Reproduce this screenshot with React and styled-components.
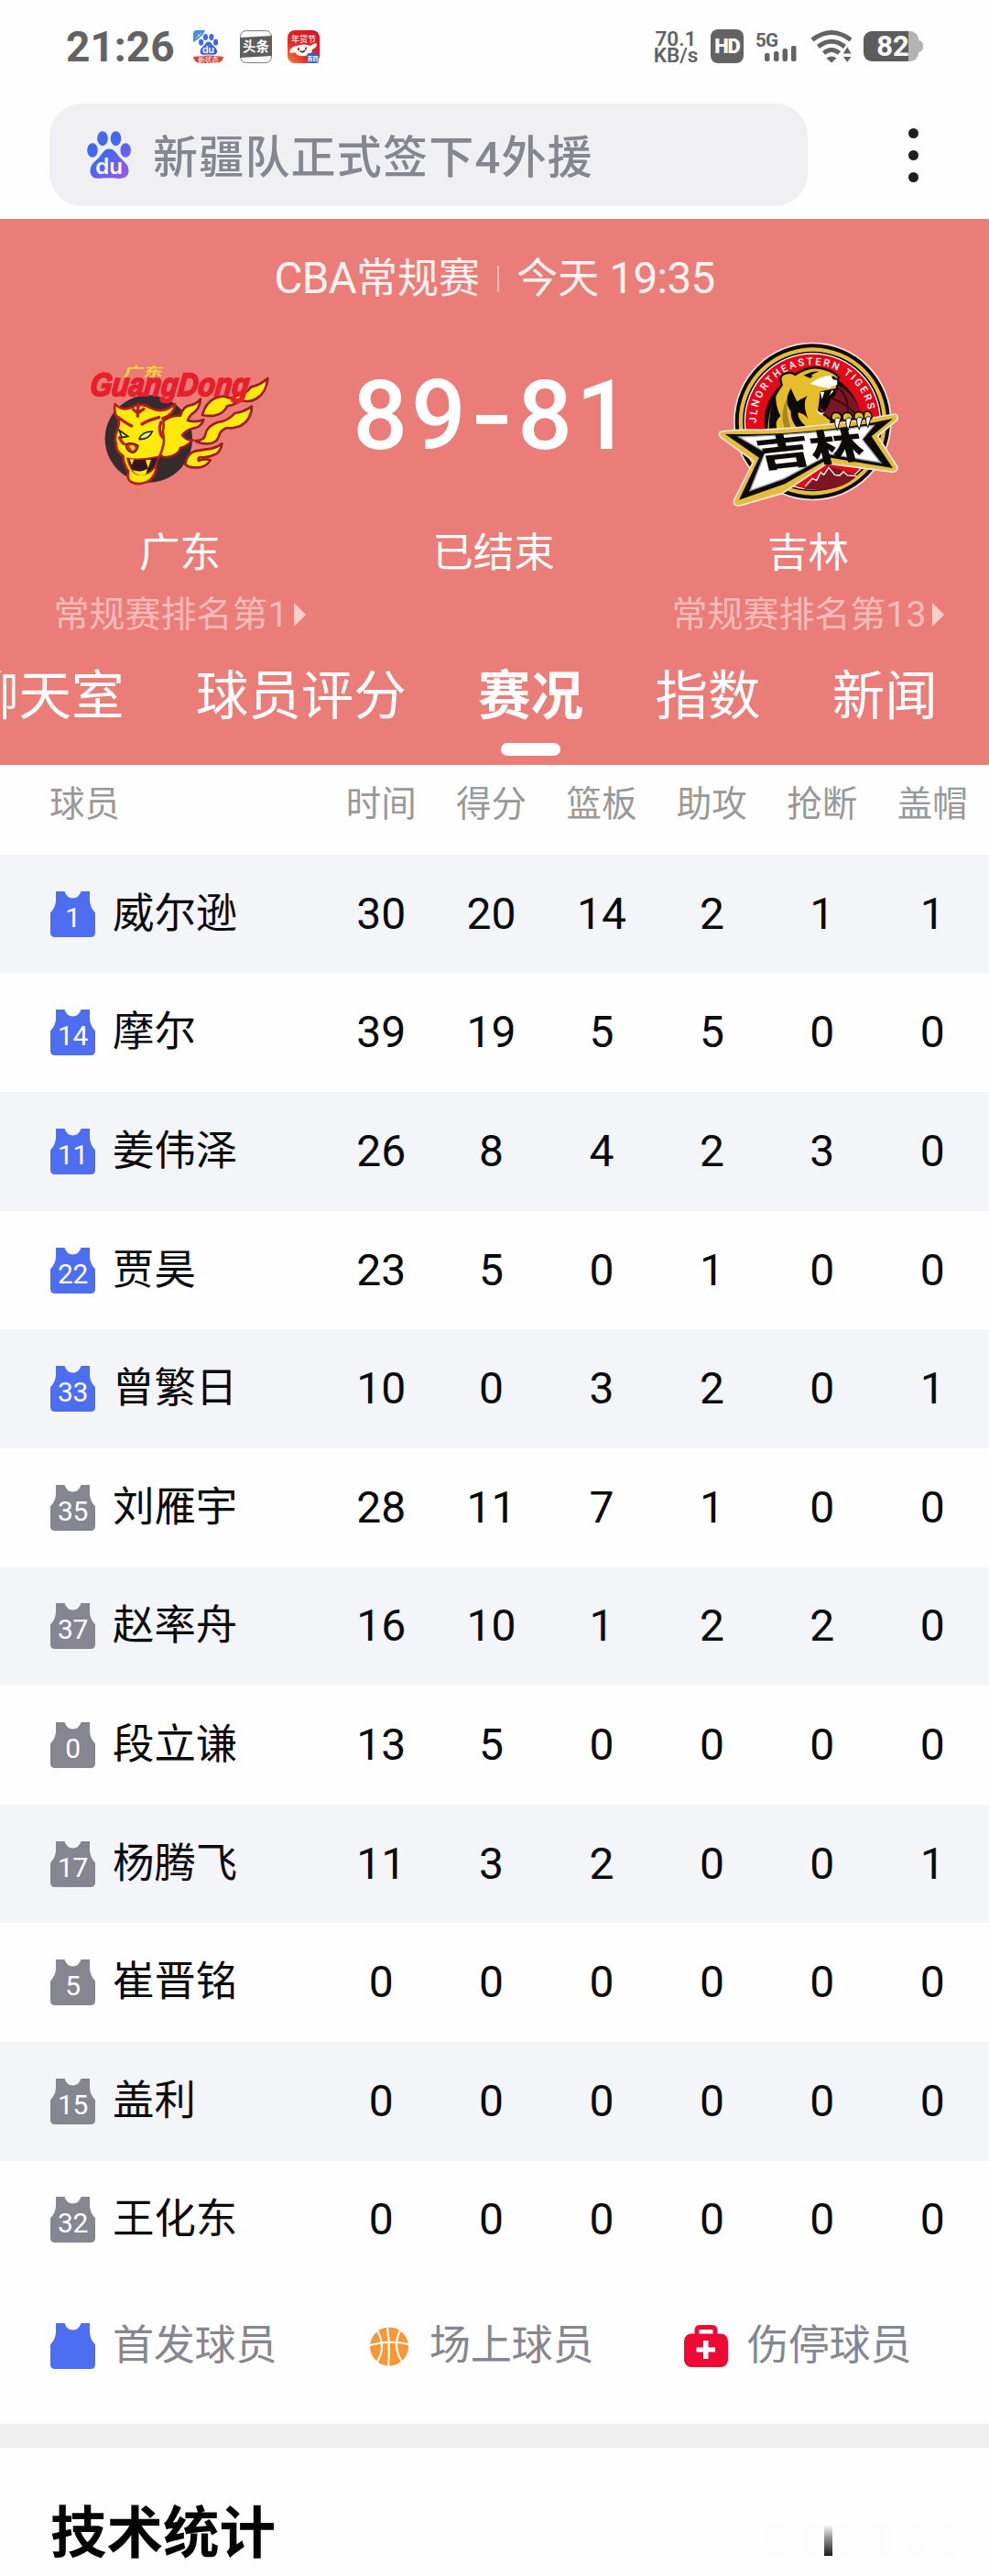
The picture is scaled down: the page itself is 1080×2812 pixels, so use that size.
import React from 'react'
import styled, { createGlobalStyle } from 'styled-components'

const GlobalStyle = createGlobalStyle`
  * {
    box-sizing: border-box;
  }

  body {
    margin: 0;
    background: #fefefe;
    font-family: Roboto, "Noto Sans CJK SC", sans-serif;
  }

  svg {
    display: block;
    flex-shrink: 0;
    overflow: visible;
  }
`;

const Page = styled.div`
  width: 1080px;
  height: 2812px;
  overflow: hidden;
  display: flex;
  flex-direction: column;
  background: #fefefe;
`;

/* status bar */

const StatusBar = styled.div`
  height: 113px;
  padding: 0 72px 12px 72px;
  display: flex;
  align-items: center;
  justify-content: space-between;
  color: #636363;
`;

const StatusGroup = styled.div`
  display: flex;
  align-items: center;
`;

const Clock = styled.div`
  width: 138px;
  font-size: 46px;
  font-weight: 700;
  line-height: 50px;
`;

const AppIcons = styled.div`
  display: flex;
  gap: 17px;
`;

const Speed = styled.div`
  width: 46px;
  margin-right: 15px;
  display: flex;
  flex-direction: column;
  align-items: center;
  font-size: 22.5px;
  line-height: 18px;
  font-weight: 600;
  white-space: nowrap;
`;

const HdBadge = styled.div`
  width: 36px;
  height: 37px;
  margin-right: 13px;
  border-radius: 8px;
  background: #636363;
  color: #fff;
  font-size: 22px;
  font-weight: 900;
  line-height: 38px;
  letter-spacing: -1px;
  text-align: center;
`;

const Battery = styled.div`
  display: flex;
  align-items: center;
`;

const BatteryBody = styled.div`
  width: 60px;
  height: 33px;
  padding-left: 4px;
  border-radius: 9px;
  background: linear-gradient(to right, #5c5c5c 82%, #b3b3b3 82%);
  color: #fff;
  font-size: 31px;
  font-weight: 700;
  line-height: 34px;
  text-align: center;
`;

const BatteryTip = styled.div`
  width: 5px;
  height: 13px;
  border-radius: 0 5px 5px 0;
  background: #b3b3b3;
`;

/* search */

const SearchRow = styled.div`
  height: 126px;
  padding: 0 77px 14px 54px;
  display: flex;
  align-items: center;
  justify-content: space-between;
`;

const SearchBox = styled.div`
  width: 828px;
  height: 112px;
  padding-left: 41px;
  display: flex;
  align-items: center;
  gap: 24px;
  border-radius: 36px;
  background: #f0f0f2;
`;

const SearchText = styled.span`
  color: #858690;
  font-size: 49px;
  font-weight: 500;
  line-height: 60px;
  letter-spacing: 1.2px;
  padding-top: 8px;
`;

const MoreButton = styled.div`
  display: flex;
  flex-direction: column;
  gap: 13px;
`;

const Dot = styled.span`
  width: 11px;
  height: 11px;
  border-radius: 50%;
  background: #1f1f1f;
`;

/* match header */

const MatchHeader = styled.div`
  height: 596px;
  padding-top: 38px;
  overflow: hidden;
  background: #eb7d79;
  color: #fff;
`;

const MatchInfo = styled.div`
  height: 54px;
  display: flex;
  align-items: center;
  justify-content: center;
  font-size: 45px;
  line-height: 56px;
  color: #fff3f1;
`;

const Latin = styled.span`
  font-size: 47.5px;
  letter-spacing: -0.6px;
`;

const InfoText = styled.span`
  padding-top: 2px;
`;

const InfoDivider = styled.span`
  width: 2px;
  height: 29px;
  margin: 0 19px;
  background: #f6b9b5;
`;

const Versus = styled.div`
  display: grid;
  grid-template-columns: 393px 292px 395px;
`;

const Team = styled.div`
  display: flex;
  flex-direction: column;
  align-items: center;
`;

const LogoBox = styled.div`
  height: 242px;
  padding-top: 41px;
`;

const TeamName = styled.div`
  height: 60px;
  font-size: 44.5px;
  line-height: 63px;
`;

const Rank = styled.div`
  height: 74px;
  display: flex;
  align-items: center;
  gap: 7px;
  font-size: 39px;
  line-height: 74px;
  padding-top: 2px;
  color: #f6bcb9;
  white-space: nowrap;
`;

const RankArrow = styled.span`
  border-left: 13px solid #f9d0ce;
  border-top: 13px solid transparent;
  border-bottom: 13px solid transparent;
`;

const Score = styled.div`
  height: 242px;
  font-size: 105px;
  font-weight: 500;
  line-height: 242px;
  letter-spacing: 4px;
  white-space: nowrap;
`;

const Dash = styled.span`
  font-family: Inter, sans-serif;
  font-weight: 500;
`;

const Tabs = styled.div`
  height: 128px;
  margin: 12px 0 0 -37px;
  display: flex;
  gap: 78.3px;
`;

const Tab = styled.div`
  display: flex;
  flex-direction: column;
  align-items: center;
  flex-shrink: 0;
  font-size: 57.5px;
  line-height: 84px;
  font-weight: ${({ $active }) => ($active ? 700 : 400)};
  white-space: nowrap;
`;

const Indicator = styled.span`
  width: 65px;
  height: 14px;
  margin-top: 8px;
  border-radius: 7px;
  background: #fff;
`;

/* player table */

const columns = '356px repeat(6, 120.4px)';

const TableHead = styled.div`
  height: 98px;
  padding-bottom: 13px;
  display: grid;
  grid-template-columns: ${columns};
  align-items: center;
  font-size: 38.5px;
  line-height: 56px;
  color: #999;
`;

const HeadName = styled.span`
  padding-left: 54px;
`;

const HeadCell = styled.span`
  text-align: center;
`;

const Row = styled.div`
  height: 129.6px;
  display: grid;
  grid-template-columns: ${columns};
  align-items: center;
  background: ${({ $shaded }) => ($shaded ? '#f4f5f9' : '#fefefe')};
`;

const Player = styled.div`
  padding-left: 55px;
  display: flex;
  align-items: center;
  gap: 19px;
  font-size: 45.4px;
  line-height: 60px;
  color: #0a0a0a;
  white-space: nowrap;
`;

const Stat = styled.span`
  font-size: 48px;
  line-height: 60px;
  text-align: center;
  color: #0a0a0a;
`;

/* legend and next section */

const Legend = styled.div`
  height: 158px;
  padding: 0 0 12px 55px;
  display: flex;
  align-items: center;
`;

const LegendItem = styled.div`
  width: ${({ $width }) => $width}px;
  display: flex;
  align-items: center;
  gap: ${({ $gap }) => $gap}px;
  font-size: 45px;
  line-height: 60px;
  letter-spacing: -0.2px;
  color: #858690;
  white-space: nowrap;
`;

const Band = styled.div`
  height: 26px;
  background: #efefef;
`;

const Section = styled.div`
  flex: 1;
  padding: 52px 24px 0 55px;
  display: flex;
  justify-content: space-between;
`;

const SectionTitle = styled.h2`
  margin: 0;
  font-size: 61.5px;
  line-height: 84px;
  font-weight: 700;
  color: #050505;
`;

const FadedMark = styled.div`
  width: 234px;
  height: 34px;
  margin-top: 32px;
  padding-left: 78px;
  background: repeating-linear-gradient(to right, #fefefe 0 14px, #fcfcfc 22px 30px, #fefefe 38px);
`;

const FadedStroke = styled.div`
  width: 9px;
  height: 34px;
  background: linear-gradient(to bottom, #fefefe, #999 40%, #1c1c1c);
`;

const players = [
  { no: 1, name: '威尔逊', starter: true, stats: [30, 20, 14, 2, 1, 1] },
  { no: 14, name: '摩尔', starter: true, stats: [39, 19, 5, 5, 0, 0] },
  { no: 11, name: '姜伟泽', starter: true, stats: [26, 8, 4, 2, 3, 0] },
  { no: 22, name: '贾昊', starter: true, stats: [23, 5, 0, 1, 0, 0] },
  { no: 33, name: '曾繁日', starter: true, stats: [10, 0, 3, 2, 0, 1] },
  { no: 35, name: '刘雁宇', stats: [28, 11, 7, 1, 0, 0] },
  { no: 37, name: '赵率舟', stats: [16, 10, 1, 2, 2, 0] },
  { no: 0, name: '段立谦', stats: [13, 5, 0, 0, 0, 0] },
  { no: 17, name: '杨腾飞', stats: [11, 3, 2, 0, 0, 1] },
  { no: 5, name: '崔晋铭', stats: [0, 0, 0, 0, 0, 0] },
  { no: 15, name: '盖利', stats: [0, 0, 0, 0, 0, 0] },
  { no: 32, name: '王化东', stats: [0, 0, 0, 0, 0, 0] },
];

const heads = ['时间', '得分', '篮板', '助攻', '抢断', '盖帽'];
const tabs = ['聊天室', '球员评分', '赛况', '指数', '新闻'];

function Paw({ width, id, color }) {
  return (
    <svg width={width} height={width * 52 / 48} viewBox="0 0 48 52">
      <defs>
        <linearGradient id={id} x1="0" y1="0" x2="48" y2="52" gradientUnits="userSpaceOnUse">
          <stop offset="0.45" stopColor="#4169ee" />
          <stop offset="1" stopColor={color} />
        </linearGradient>
      </defs>
      <g fill={`url(#${id})`}>
        <ellipse cx="6" cy="21" rx="5.8" ry="7.8" />
        <ellipse cx="17" cy="8.2" rx="5.8" ry="8" />
        <ellipse cx="31.5" cy="8.2" rx="5.8" ry="8" />
        <ellipse cx="42.2" cy="21" rx="5.8" ry="7.8" />
        <path d="M24 19.500c6 0 8 5 12 9.500 5 5 9.500 8 9.500 14.500 0 7-6 8.500-12 8.300-7-.6-12-.6-19 0-6 .2-11-1.300-11-8.300 0-6.500 4.500-9.500 9.500-14.500 4-4.500 6-9.500 11-9.500z" />
      </g>
      <text x="24" y="47" textAnchor="middle" fontFamily="Inter, sans-serif" fontWeight="600" fontSize="24" fill="#fff">du</text>
    </svg>
  )
}

function BaiduApp() {
  return (
    <svg width="35" height="36" viewBox="0 0 35 36">
      <path d="M1 13V4q0-4 4-4h9q-3 8-13 13z" fill="#4a8be0" />
      <path d="M4 9l6-6M6 4l3 4" stroke="#bfe0ff" strokeWidth="1" />
      <g transform="translate(7 4) scale(.44)">
        <Paw width={48} id="pawSmall" color="#3a52c8" />
      </g>
      <path d="M1 29q16-3 33 0-1 7-9 7H10q-8 0-9-7z" fill="#d8433f" />
      <text x="17.500" y="35" textAnchor="middle" fontSize="7.500" fontFamily="Noto Sans CJK SC" fill="#fff">新状态</text>
    </svg>
  )
}

function ToutiaoApp() {
  return (
    <svg width="35" height="36" viewBox="0 0 35 36">
      <rect x=".6" y=".6" width="33.800" height="34.800" rx="6" fill="#fff" stroke="#777" />
      <path d="M0 8l35-2v22l-35 2z" fill="#5e5e5e" />
      <text x="17.500" y="23" textAnchor="middle" fontSize="14.500" fontWeight="700" fontFamily="Noto Sans CJK SC" fill="#fff">头条</text>
    </svg>
  )
}

function FestivalApp() {
  return (
    <svg width="35" height="36" viewBox="0 0 35 36">
      <defs>
        <linearGradient id="fest" x1="0" y1="1" x2="1" y2="0">
          <stop offset="0" stopColor="#f58a35" />
          <stop offset=".35" stopColor="#e5292b" />
          <stop offset="1" stopColor="#cf1626" />
        </linearGradient>
      </defs>
      <rect width="35" height="36" rx="8" fill="url(#fest)" />
      <text x="17.500" y="13" textAnchor="middle" fontSize="9" fontWeight="500" fontFamily="Noto Sans CJK SC" fill="#fff1dc">年货节</text>
      <path d="M2 24q1-6 8-7 8-3 15 0 5-4 7-2 0 4-5 6 0 6-8 7-9 1-11-4-3 2-6 0z" fill="#fff4ef" />
      <path d="M12 19v3M20 18.500v3M13.500 22.500q3 2.500 5.500-.5" stroke="#3a1010" strokeWidth="1.400" fill="none" />
      <rect x="21" y="25" width="13" height="11" rx="3" fill="#2a68c8" />
      <text x="27.500" y="33" textAnchor="middle" fontSize="6" fontWeight="700" fontFamily="Noto Sans CJK SC" fill="#fff">百四</text>
    </svg>
  )
}

function Signal() {
  return (
    <svg width="61" height="34" viewBox="0 0 61 34">
      <text x="0" y="16.500" fontSize="20.500" fontWeight="700" fontFamily="Roboto, sans-serif" letterSpacing="-0.8" fill="#636363">5G</text>
      <g fill="#636363">
        <rect x="10" y="24" width="5.500" height="9" rx="2" />
        <rect x="20" y="22" width="5.500" height="11" rx="2" />
        <rect x="29.500" y="19" width="5.500" height="14" rx="2" />
        <rect x="39" y="16" width="5.500" height="17" rx="2" />
      </g>
    </svg>
  )
}

function Wifi() {
  return (
    <svg width="57" height="36" viewBox="0 0 57 36">
      <g fill="none" stroke="#636363" strokeWidth="4.800">
        <path d="M1 10.500Q22 -5.500 43 10.500" />
        <path d="M7.500 18Q22 6.500 36.500 18" />
        <path d="M13.500 25Q22 18 30.500 25" />
      </g>
      <path d="M16.500 30.500Q22 26.500 27.500 30.500L22 35.500z" fill="#636363" />
      <path d="M34 26l5.200-8.500 5.200 8.500zM34 28.500h10.400l-5.200 7z" fill="#636363" stroke="#fefefe" strokeWidth="1" />
    </svg>
  )
}

function Jersey({ no, color }) {
  return (
    <svg width="49" height="50" viewBox="0 0 49 50">
      <path d="M6 0h9.500q2.500 7.500 9 7.500t9-7.500H43v10q0 7 6 13.500V45q0 5-5 5H5q-5 0-5-5V23.500Q6 17 6 10z" fill={color} />
      {no !== undefined && (
        <text x="24.500" y="38.500" textAnchor="middle" fontSize="30" fontFamily="Roboto, sans-serif" letterSpacing="-0.4" fill="#fff">{no}</text>
      )}
    </svg>
  )
}

function Basketball() {
  return (
    <svg width="42" height="43" viewBox="0 0 42 43">
      <circle cx="21" cy="21.500" r="21" fill="#fa9633" />
      <g fill="none" stroke="#fff" strokeWidth="2.200">
        <path d="M19 0Q22 22 20 43" />
        <path d="M0 20Q21 14 42 19" />
        <path d="M8 4Q18 22 8 38" />
        <path d="M33 4Q24 22 35 38" />
      </g>
    </svg>
  )
}

function MedKit() {
  return (
    <svg width="48" height="46" viewBox="0 0 48 46">
      <path d="M14 13V6q0-3.500 3.500-3.500h13Q34 2.500 34 6v7" fill="none" stroke="#ee0a35" strokeWidth="5" />
      <rect y="9.500" width="48" height="36.500" rx="8" fill="#ee0a35" />
      <path d="M21 17h5.500v7.500H34v5h-7.500V37H21v-7.500h-7.500v-5H21z" fill="#fff" />
    </svg>
  )
}

// Guangdong Southern Tigers crest
function GuangdongLogo() {
  return (
    <svg width="200" height="183" viewBox="114 33 600 549">
      <circle cx="310" cy="354" r="143" fill="#332b2e" />
      <g fill="#fdea0b" stroke="#9c1c22" strokeWidth="8" strokeLinejoin="round">
        <path d="M352 300q30-25 62-22 8-30 32-34 22-4 34-20-2 34-30 50-8 8-12 20 26 8 52-2-8 24-36 28-22 6-34 22 14 18 34 16-20 22-40 26-4 24-44 30-20 2-24-12z" />
        <path d="M486 276q10-38 36-52 24-14 46-6 16 6 30-6 30-2 48-28 30-6 54-28-4 46-36 66-22 14-52 6-18 16-44 18-12 26-42 32-24 2-40-2z" />
        <path d="M462 360q30 2 34-20 4-28 40-40 34-4 56-30 26-2 56-22-2 46-38 64-26 10-44 6-22 8-26 28-8 24-38 24-28 0-40-10z" />
        <path d="M430 438q4-36 34-44 28-4 52-8 20-4 34-16-4 28-24 36-26 12-48 8-8 4-4 12 18-8 38-2-14 24-44 24-26 2-38-10z" />
      </g>
      <path d="M200 240q20 24 52 12 34-20 66 2 40 20 78-14-2 34-40 46 6 26 0 46 8 30 0 50-6 30-22 44 6 50-30 70-36 12-56-4-10-12-4-32-16-20-18-50-24-14-22-40-8-24 4-44 6-20 4-34-18-20-12-52z" fill="#fdea0b" stroke="#b81d22" strokeWidth="8" strokeLinejoin="round" />
      <g fill="none" stroke="#b81d22" strokeWidth="10" strokeLinecap="round">
        <path d="M260 258l14 12 20-14M276 240l-2 40" />
        <path d="M208 282q26 20 46 30M344 284q-38 10-56 22" />
        <path d="M350 300q-10 30 6 50M214 350q6 14 14 20" />
      </g>
      <path d="M214 326l28 20-20 4zM280 352q10-22 42-22-10 26-42 26z" fill="#d9ef7c" stroke="#2b1c1e" strokeWidth="5" />
      <path d="M234 372q22-10 42 4-4 22-18 24-22-4-24-28z" fill="#d62a25" stroke="#4a1518" strokeWidth="4" />
      <path d="M246 378q14-8 20 6l-8 10z" fill="#fdea0b" />
      <path d="M240 418q40 8 102-6-10 50-44 58-28 4-40-10-14-20-18-42z" fill="#31181b" stroke="#b81d22" strokeWidth="5" />
      <path d="M248 420l6 20 8-18zM300 424l8 26 10-28zM256 456q30 10 50-4l-6 20q-30 6-44-16z" fill="#fdea0b" />
      <text transform="translate(116 214) skewX(-6)" fontFamily="Liberation Sans Narrow, Liberation Sans, sans-serif" fontSize="106" fontWeight="700" fontStyle="italic" textLength="520" lengthAdjust="spacingAndGlyphs" fill="#e5202c" stroke="#e5202c" strokeWidth="6">GuangDong</text>
      <text transform="translate(226 149) skewX(-15)" fontFamily="Noto Sans CJK SC" fontSize="43" fontWeight="700" textLength="128" lengthAdjust="spacingAndGlyphs" fill="#f6d735">广东</text>
    </svg>
  )
}

// Jilin Northeast Tigers crest
function JilinLogo() {
  return (
    <svg width="200" height="183.300" viewBox="70 65 600 550">
      <circle cx="383" cy="329" r="259" fill="#fbe7df" />
      <circle cx="383" cy="329" r="254" fill="#0d0b09" />
      <circle cx="383" cy="329" r="242" fill="#e4bd3f" />
      <circle cx="383" cy="329" r="229" fill="#0d0b09" />
      <circle cx="383" cy="329" r="224" fill="#fff" />
      <circle cx="383" cy="329" r="220" fill="#e20a18" />
      <circle cx="383" cy="329" r="158" fill="#17100f" />
      <path id="ring" d="M199 340A184 184 0 1 1 569 318" fill="none" />
      <text fontFamily="Roboto, sans-serif" fontSize="33" fontWeight="500" fill="#fff">
        <textPath href="#ring" textLength="548" startOffset="6">JLNORTHEASTERN TIGERS</textPath>
      </text>
      <path d="M400 200q96-10 142 100v30H400z" fill="#7c1622" />
      <path d="M470 220q30 30 30 80M440 250q50 20 80 50" stroke="#3d0a12" strokeWidth="6" fill="none" />
      <path d="M232 360q4-90 50-150-10-30 12-38 20-6 32 4 50-34 96-18 34 10 46 26l-6 40-50 10-8 60 40 30v36z" fill="#e8bd2b" stroke="#0d0b09" strokeWidth="7" />
      <path d="M262 240q-24 60-22 118h28q-12-30 10-46-16-30-16-72zM312 220q-26 44 0 76-4 26 24 60h40q-44-30-40-56 20 4 32 20-20-50-2-74-22 10-34 18-10-20-20-44zM354 178q30-16 50-12-24 6-32 20zM408 232q40-6 54-2-4 20-20 24-6 30-22 44-20-26-12-66z" fill="#0d0b09" />
      <path d="M300 250q-26 54-8 106h22q-20-50-14-106z" fill="#a5842a" />
      <path d="M374 206q30-26 74-28 18 8 16 30l-28 12-32-6z" fill="#fff" />
      <path d="M444 180q18 2 20 14l-14-2zM358 178l26 2-8 8z" fill="#0d0b09" />
      <path d="M408 232l6 24 8-24zM446 226l-8 18 14-14zM396 290q12 16 28 8l-10 10q-14 0-18-18z" fill="#fff" />
      <path d="M286 204q-12-22 8-28 16-2 22 6-20 4-30 22z" fill="#e8bd2b" />
      <path d="M300 528l130-80 110 30q-60 80-180 72z" fill="#e20a18" />
      <path d="M356 550l80-74 94 30q-60 60-174 44z" fill="#7c1622" />
      <path d="M358 542l24-26 14 6 14-26 10 8 16-24 20 24 16 2 12-12 14 12 30 2" fill="none" stroke="#fff" strokeWidth="4" />
      <path d="M82 362q60-8 130-5 220-10 440-52 14 4 8 20l-64 52 64 100q4 14-12 18l-110-14-108-14-146 98-140 40q-22 2-18-18l64-128-108-78q-10-12 0-19z" fill="#e4bd3f" stroke="#fbe7df" strokeWidth="5" strokeLinejoin="round" />
      <path d="M96 370q280 8 550-50l-70 58 70 104-204-34-150 86-150 52 66-138z" fill="#0d0b09" />
      <path d="M142 380q230-8 442-38l-38 46 60 76-166-28-150 80-112 40 50-126z" fill="#fff" stroke="#a3a2ab" strokeWidth="4" />
      <text transform="translate(212 482) rotate(-6) skewX(8)" fontFamily="Noto Sans CJK SC" fontSize="122" fontWeight="900" textLength="350" lengthAdjust="spacingAndGlyphs" fill="#0d0b09">吉林</text>
      <g fill="#e8bd2b" stroke="#0d0b09" strokeWidth="5">
        <path d="M446 322q-4-22 14-22t18 20l-14 12z" />
        <path d="M482 322q-4-22 14-22t18 20l-14 12z" />
        <path d="M520 320q-4-22 14-22t18 20l-14 12z" />
        <path d="M552 318q-4-22 10-22t16 20l-12 12z" />
      </g>
      <g fill="#fff" stroke="#0d0b09" strokeWidth="3">
        <path d="M456 322q10-10 18 0l-10 36q-10-18-8-36z" />
        <path d="M492 322q10-10 18 0l-10 36q-10-18-8-36z" />
        <path d="M528 320q10-10 18 0l-10 36q-10-18-8-36z" />
        <path d="M558 318q8-10 16 0l-10 32q-8-16-6-32z" />
      </g>
    </svg>
  )
}

function App() {
  return (
    <Page>
      <GlobalStyle />
      <StatusBar>
        <StatusGroup>
          <Clock>21:26</Clock>
          <AppIcons>
            <BaiduApp />
            <ToutiaoApp />
            <FestivalApp />
          </AppIcons>
        </StatusGroup>
        <StatusGroup>
          <Speed>
            <span>70.1</span>
            <span>KB/s</span>
          </Speed>
          <HdBadge>HD</HdBadge>
          <Signal />
          <Wifi />
          <Battery>
            <BatteryBody>82</BatteryBody>
            <BatteryTip />
          </Battery>
        </StatusGroup>
      </StatusBar>

      <SearchRow>
        <SearchBox>
          <Paw width={48} id="pawSearch" color="#a855e8" />
          <SearchText>新疆队正式签下4外援</SearchText>
        </SearchBox>
        <MoreButton>
          <Dot />
          <Dot />
          <Dot />
        </MoreButton>
      </SearchRow>

      <MatchHeader>
        <MatchInfo>
          <Latin>CBA</Latin>
          <InfoText>常规赛</InfoText>
          <InfoDivider />
          <InfoText>今天&nbsp;</InfoText>
          <Latin>19:35</Latin>
        </MatchInfo>
        <Versus>
          <Team>
            <LogoBox><GuangdongLogo /></LogoBox>
            <TeamName>广东</TeamName>
            <Rank>常规赛排名第1<RankArrow /></Rank>
          </Team>
          <Team>
            <Score>89<Dash>-</Dash>81</Score>
            <TeamName>已结束</TeamName>
          </Team>
          <Team>
            <LogoBox><JilinLogo /></LogoBox>
            <TeamName>吉林</TeamName>
            <Rank>常规赛排名第13<RankArrow /></Rank>
          </Team>
        </Versus>
        <Tabs>
          {tabs.map((tab) => (
            <Tab key={tab} $active={tab === '赛况'}>
              {tab}
              {tab === '赛况' && <Indicator />}
            </Tab>
          ))}
        </Tabs>
      </MatchHeader>

      <TableHead>
        <HeadName>球员</HeadName>
        {heads.map((head) => <HeadCell key={head}>{head}</HeadCell>)}
      </TableHead>
      {players.map((player, i) => (
        <Row key={player.no} $shaded={i % 2 === 0}>
          <Player>
            <Jersey no={player.no} color={player.starter ? '#4e6ef2' : '#868691'} />
            {player.name}
          </Player>
          {player.stats.map((stat, j) => <Stat key={heads[j]}>{stat}</Stat>)}
        </Row>
      ))}

      <Legend>
        <LegendItem $width={349} $gap={19}><Jersey color="#4e6ef2" />首发球员</LegendItem>
        <LegendItem $width={343} $gap={23}><Basketball />场上球员</LegendItem>
        <LegendItem $width={260} $gap={21}><MedKit />伤停球员</LegendItem>
      </Legend>
      <Band />
      <Section>
        <SectionTitle>技术统计</SectionTitle>
        <FadedMark><FadedStroke /></FadedMark>
      </Section>
    </Page>
  )
}

export default App
